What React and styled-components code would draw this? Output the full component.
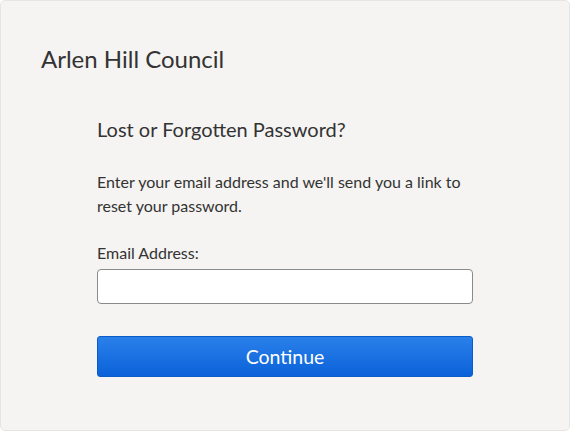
import React from 'react';
import styled, { createGlobalStyle } from 'styled-components';

const GlobalStyle = createGlobalStyle`
  body {
    margin: 0;
    background: #fff;
    font-family: Lato, "Open Sans", sans-serif;
    color: #333;
  }
`;

const Panel = styled.div`
  box-sizing: border-box;
  width: 570px;
  height: 431px;
  background: #f5f4f2;
  border: 1px solid #e6e5e3;
  border-radius: 5px;
  padding: 41px 0 0 40px;
`;

const SiteTitle = styled.h1`
  margin: 0;
  font-size: 24px;
  font-weight: 400;
  line-height: 34px;
  color: #333;
`;

const Form = styled.form`
  width: 376px;
  margin: 39px 0 0 56px;
  display: flex;
  flex-direction: column;
`;

const Heading = styled.h2`
  margin: 0 0 27px;
  font-size: 20px;
  font-weight: 400;
  line-height: 28px;
  color: #333;
`;

const Intro = styled.p`
  margin: 0 0 25px;
  font-size: 16px;
  line-height: 24px;
  color: #333;
`;

const Label = styled.label`
  font-size: 16px;
  line-height: 20px;
  margin-bottom: 6px;
`;

const Input = styled.input`
  box-sizing: border-box;
  width: 376px;
  height: 35px;
  border: 1px solid #8a8a8a;
  border-radius: 4px;
  background: #fff;
  padding: 0 8px;
  font: inherit;
  outline: none;
`;

const Button = styled.button`
  box-sizing: border-box;
  margin-top: 32px;
  width: 376px;
  height: 41px;
  border: 1px solid #0b5cc9;
  border-radius: 3px;
  background: linear-gradient(#2a80ea, #0b62d9);
  color: #fff;
  font-family: inherit;
  font-size: 19.5px;
  cursor: pointer;
`;

export default function App() {
  return (
    <>
      <GlobalStyle />
      <Panel>
        <SiteTitle>Arlen Hill Council</SiteTitle>
        <Form onSubmit={(e) => e.preventDefault()}>
          <Heading>Lost or Forgotten Password?</Heading>
          <Intro>
            Enter your email address and we'll send you a link to reset your
            password.
          </Intro>
          <Label htmlFor="email">Email Address:</Label>
          <Input id="email" type="email" />
          <Button type="submit">Continue</Button>
        </Form>
      </Panel>
    </>
  );
}
